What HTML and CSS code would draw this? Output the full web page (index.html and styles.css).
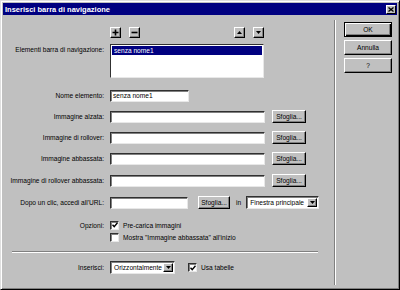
FILE: index.html
```html
<!DOCTYPE html>
<html>
<head>
<meta charset="utf-8">
<title>Inserisci barra di navigazione</title>
<link rel="stylesheet" href="styles.css">
</head>
<body>
<div class="window">
    <div class="titlebar">
        <span class="title">Inserisci barra di navigazione</span>
        <span class="close">
            <svg width="6" height="5" viewBox="0 0 6 5"><path d="M0.5 0.5L5.5 4.5M5.5 0.5L0.5 4.5" stroke="#000" stroke-width="1.3"/></svg>
        </span>
    </div>

    <div class="dialog">
        <div class="form">

            <div class="row r-tools">
                <div class="label"></div>
                <div class="tools">
                    <div class="group">
                        <div class="btn tiny"><svg width="7" height="7" viewBox="0 0 7 7"><path d="M3.5 0.5V6.5M0.5 3.5H6.5" stroke="#000" stroke-width="1.6"/></svg></div>
                        <div class="btn tiny"><svg width="7" height="7" viewBox="0 0 7 7"><path d="M0.5 3.5H6.5" stroke="#000" stroke-width="1.6"/></svg></div>
                    </div>
                    <div class="group">
                        <div class="btn tiny"><svg width="5" height="3" viewBox="0 0 5 3"><path d="M0 3L2.5 0L5 3Z" fill="#000"/></svg></div>
                        <div class="btn tiny"><svg width="5" height="3" viewBox="0 0 5 3"><path d="M0 0L2.5 3L5 0Z" fill="#000"/></svg></div>
                    </div>
                </div>
            </div>

            <div class="row r-list">
                <div class="label">Elementi barra di navigazione:</div>
                <div class="listbox">
                    <div class="item selected">senza nome1</div>
                </div>
            </div>

            <div class="row r-name">
                <div class="label">Nome elemento:</div>
                <div class="field w-name">senza nome1</div>
            </div>

            <div class="row r-img">
                <div class="label">Immagine alzata:</div>
                <div class="field w-img"></div>
                <div class="btn browse">Sfoglia...</div>
            </div>

            <div class="row r-img">
                <div class="label">Immagine di rollover:</div>
                <div class="field w-img"></div>
                <div class="btn browse">Sfoglia...</div>
            </div>

            <div class="row r-img">
                <div class="label">Immagine abbassata:</div>
                <div class="field w-img"></div>
                <div class="btn browse">Sfoglia...</div>
            </div>

            <div class="row r-img2">
                <div class="label">Immagine di rollover abbassata:</div>
                <div class="field w-img"></div>
                <div class="btn browse">Sfoglia...</div>
            </div>

            <div class="row r-img2">
                <div class="label">Dopo un clic, accedi all'URL:</div>
                <div class="field w-url"></div>
                <div class="btn browse browse-url">Sfoglia...</div>
                <span class="in">in</span>
                <div class="combo w-target">
                    <span class="combo-text">Finestra principale</span>
                    <span class="btn drop"><svg width="5" height="3" viewBox="0 0 5 3"><path d="M0 0L2.5 3L5 0Z" fill="#000"/></svg></span>
                </div>
            </div>

            <div class="row r-opt">
                <div class="label">Opzioni:</div>
                <span class="check"><svg width="6" height="6" viewBox="0 0 6 6"><path d="M0.5 2.8L2.2 4.6L5.5 0.8" stroke="#000" stroke-width="1.4" fill="none"/></svg></span>
                <span class="check-text">Pre-carica immagini</span>
            </div>

            <div class="row r-opt2">
                <div class="label"></div>
                <span class="check"></span>
                <span class="check-text">Mostra "Immagine abbassata" all'inizio</span>
            </div>

            <div class="hsep"></div>

            <div class="row r-insert">
                <div class="label">Inserisci:</div>
                <div class="combo w-insert">
                    <span class="combo-text">Orizzontalmente</span>
                    <span class="btn drop"><svg width="5" height="3" viewBox="0 0 5 3"><path d="M0 0L2.5 3L5 0Z" fill="#000"/></svg></span>
                </div>
                <span class="check check-tables"><svg width="6" height="6" viewBox="0 0 6 6"><path d="M0.5 2.8L2.2 4.6L5.5 0.8" stroke="#000" stroke-width="1.4" fill="none"/></svg></span>
                <span class="check-text">Usa tabelle</span>
            </div>

        </div>

        <div class="vsep"></div>

        <div class="actions">
            <div class="btn act default">OK</div>
            <div class="btn act">Annulla</div>
            <div class="btn act">?</div>
        </div>
    </div>
</div>
</body>
</html>
```

FILE: styles.css
```css
html, body { margin: 0; background: #c0c0c0; }
body { font-family: "Liberation Sans", Arial, sans-serif; font-size: 6.6px; color: #000; }

.window {
	width: 400px;
	height: 290px;
	box-sizing: border-box;
	border: 1px solid;
	border-color: #dfdfdf #000 #000 #dfdfdf;
	box-shadow: inset 1px 1px #fff, inset -1px -1px #808080;
	padding: 1px;
	background: #c0c0c0;
	display: flex;
	flex-direction: column;
}

.titlebar {
	margin: 1px 1px 0;
	height: 12px;
	flex: none;
	background: #000080;
	display: flex;
	align-items: center;
	justify-content: space-between;
	padding: 0 1px 0 2px;
}
.title { color: #fff; font-weight: bold; font-size: 7.5px; }
.close {
	width: 10px;
	height: 9px;
	box-sizing: border-box;
	background: #c0c0c0;
	border: 1px solid;
	border-color: #fff #000 #000 #fff;
	display: flex;
	align-items: center;
	justify-content: center;
}

.dialog { flex: 1; display: flex; }
.form { width: 332px; flex: none; }

.vsep {
	width: 2px;
	margin: 5px 0 3px;
	box-sizing: border-box;
	border-left: 1px solid #808080;
	border-right: 1px solid #fff;
}

.actions { display: flex; flex-direction: column; gap: 3px; padding: 7px 0 0 8px; }

/* raised button */
.btn {
	box-sizing: border-box;
	background: #c0c0c0;
	border: 1px solid;
	border-color: #fff #000 #000 #fff;
	box-shadow: inset -1px -1px #808080;
	display: flex;
	align-items: center;
	justify-content: center;
	flex: none;
}
.act { width: 48px; height: 15px; }
.act.default {
	border-color: #000;
	box-shadow: inset 1px 1px #fff, inset -1px -1px #000, inset -2px -2px #808080;
}
.tiny { width: 11px; height: 11px; }
.browse { width: 34px; height: 13px; margin-left: 7px; }
.browse-url { width: 32px; margin-left: 10px; }

/* rows */
.row { display: flex; align-items: center; height: 13px; margin-top: 8px; }
.label { width: 102px; margin-right: 6px; text-align: right; flex: none; }

.r-tools { height: 12px; margin-top: 11px; }
.r-list { height: 34px; margin-top: 6px; align-items: flex-start; }
.r-list .label { padding-top: 2px; }
.r-name { margin-top: 11px; }
.r-img2 { margin-top: 9px; }
.r-opt { height: 10px; margin-top: 11px; }
.r-opt2 { height: 10px; margin-top: 2px; }
.r-insert { margin-top: 8px; }

.tools { width: 154px; display: flex; justify-content: space-between; }
.group { display: flex; gap: 8px; }

/* sunken fields */
.field, .listbox, .combo, .check {
	box-sizing: border-box;
	background: #fff;
	border: 1px solid;
	border-color: #303030 #e8e8e8 #e8e8e8 #303030;
	box-shadow: inset 1px 1px #808080;
	flex: none;
}
.field { height: 12px; padding-left: 2px; line-height: 10px; }
.w-name { width: 79px; }
.w-img { width: 155px; }
.w-url { width: 78px; }

.listbox { width: 154px; height: 34px; padding: 1px 1px 0 1px; box-shadow: none; }
.item { height: 9px; line-height: 9px; padding-left: 2px; }
.selected { background: #000080; color: #fff; }

.in { margin-left: 6px; }
.combo { height: 13px; display: flex; align-items: center; padding: 1px; }
.combo-text { flex: 1; padding-left: 2px; white-space: nowrap; overflow: hidden; }
.drop { width: 10px; height: 100%; }
.w-target { width: 73px; margin-left: 5px; }
.w-insert { width: 65px; }

.check { width: 9px; height: 9px; display: flex; align-items: center; justify-content: center; }
.check-text { margin-left: 4px; white-space: nowrap; }
.check-tables { margin-left: 13px; }

.hsep {
	margin: 9px 0 0 10px;
	width: 306px;
	height: 2px;
	box-sizing: border-box;
	border-top: 1px solid #808080;
	border-bottom: 1px solid #fff;
}
```
